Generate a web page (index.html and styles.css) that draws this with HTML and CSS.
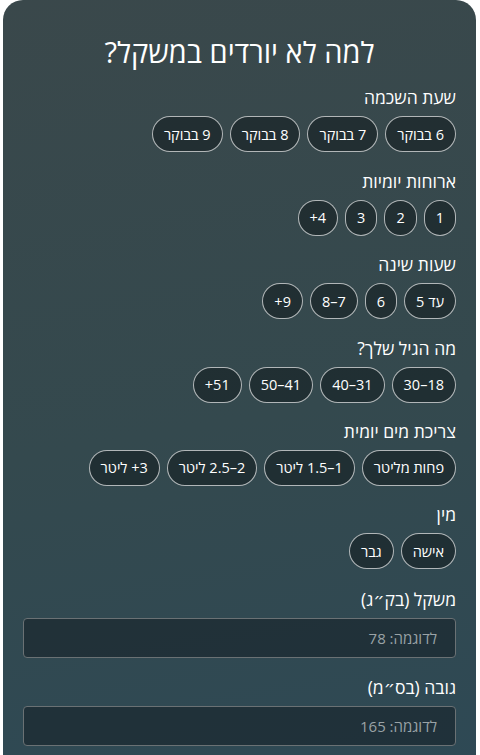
FILE: index.html
```html
<!DOCTYPE html>
<html lang="he" dir="rtl">
<head>
  <meta charset="UTF-8">
  <meta name="viewport" content="width=device-width, initial-scale=1.0">
  <title>למה לא יורדים במשקל?</title>
  <link rel="stylesheet" href="styles.css">
</head>
<body>
  <div class="card">
    <h1>למה לא יורדים במשקל?</h1>

    <div class="field">
      <div class="label">שעת השכמה</div>
      <div class="chips">
        <button class="chip">6 בבוקר</button>
        <button class="chip">7 בבוקר</button>
        <button class="chip">8 בבוקר</button>
        <button class="chip">9 בבוקר</button>
      </div>
    </div>

    <div class="field">
      <div class="label">ארוחות יומיות</div>
      <div class="chips">
        <button class="chip">1</button>
        <button class="chip">2</button>
        <button class="chip">3</button>
        <button class="chip">4+</button>
      </div>
    </div>

    <div class="field">
      <div class="label">שעות שינה</div>
      <div class="chips">
        <button class="chip">עד 5</button>
        <button class="chip">6</button>
        <button class="chip">7–8</button>
        <button class="chip">9+</button>
      </div>
    </div>

    <div class="field">
      <div class="label">מה הגיל שלך?</div>
      <div class="chips">
        <button class="chip">18–30</button>
        <button class="chip">31–40</button>
        <button class="chip">41–50</button>
        <button class="chip">51+</button>
      </div>
    </div>

    <div class="field">
      <div class="label">צריכת מים יומית</div>
      <div class="chips">
        <button class="chip">פחות מליטר</button>
        <button class="chip">1–1.5 ליטר</button>
        <button class="chip">2–2.5 ליטר</button>
        <button class="chip">3+ ליטר</button>
      </div>
    </div>

    <div class="field">
      <div class="label">מין</div>
      <div class="chips">
        <button class="chip">אישה</button>
        <button class="chip">גבר</button>
      </div>
    </div>

    <div class="field measures">
      <label class="label" for="weight">משקל (בק״ג)</label>
      <input class="text-input" type="number" id="weight" placeholder="לדוגמה: 78">
    </div>

    <div class="field">
      <label class="label" for="height">גובה (בס״מ)</label>
      <input class="text-input" type="number" id="height" placeholder="לדוגמה: 165">
    </div>
  </div>
</body>
</html>
```

FILE: styles.css
```css
body {
  margin: 0;
  background-color: #fff;
  font-family: "Open Sans", "Noto Sans", "DejaVu Sans", sans-serif;
  color: #fff;
}
.card {
  margin: 0 4px 0 3px;
  min-height: 800px;
  padding: 20px;
  border-radius: 20px 20px 0 0;
  background: linear-gradient(170deg, #3a484b 0%, #34494e 50%, #2d4956 100%);
}
h1 {
  margin: 15px 0 0;
  font-size: 29px;
  font-weight: 500;
  line-height: 34px;
  text-align: center;
}
.field {
  margin-top: 17.4px;
}
.field.measures {
  margin-top: 19px;
}
.label {
  display: block;
  font-size: 17.5px;
  line-height: 22px;
  margin-bottom: 8px;
}
.chips {
  display: flex;
  flex-wrap: wrap;
  gap: 7px;
}
.chip {
  height: 36px;
  padding: 0 11px;
  font-family: inherit;
  font-size: 14.5px;
  color: #fff;
  background-color: rgba(20, 30, 33, 0.6);
  border: 1px solid rgba(255, 255, 255, 0.65);
  border-radius: 18px;
  cursor: pointer;
}
.text-input {
  box-sizing: border-box;
  display: block;
  width: 100%;
  height: 40px;
  padding: 0 18px;
  font-family: inherit;
  font-size: 15px;
  color: #fff;
  background-color: rgba(20, 30, 36, 0.55);
  border: 1px solid #6a7174;
  border-radius: 4px;
}
.text-input::placeholder {
  color: #9aa3a6;
}
```
